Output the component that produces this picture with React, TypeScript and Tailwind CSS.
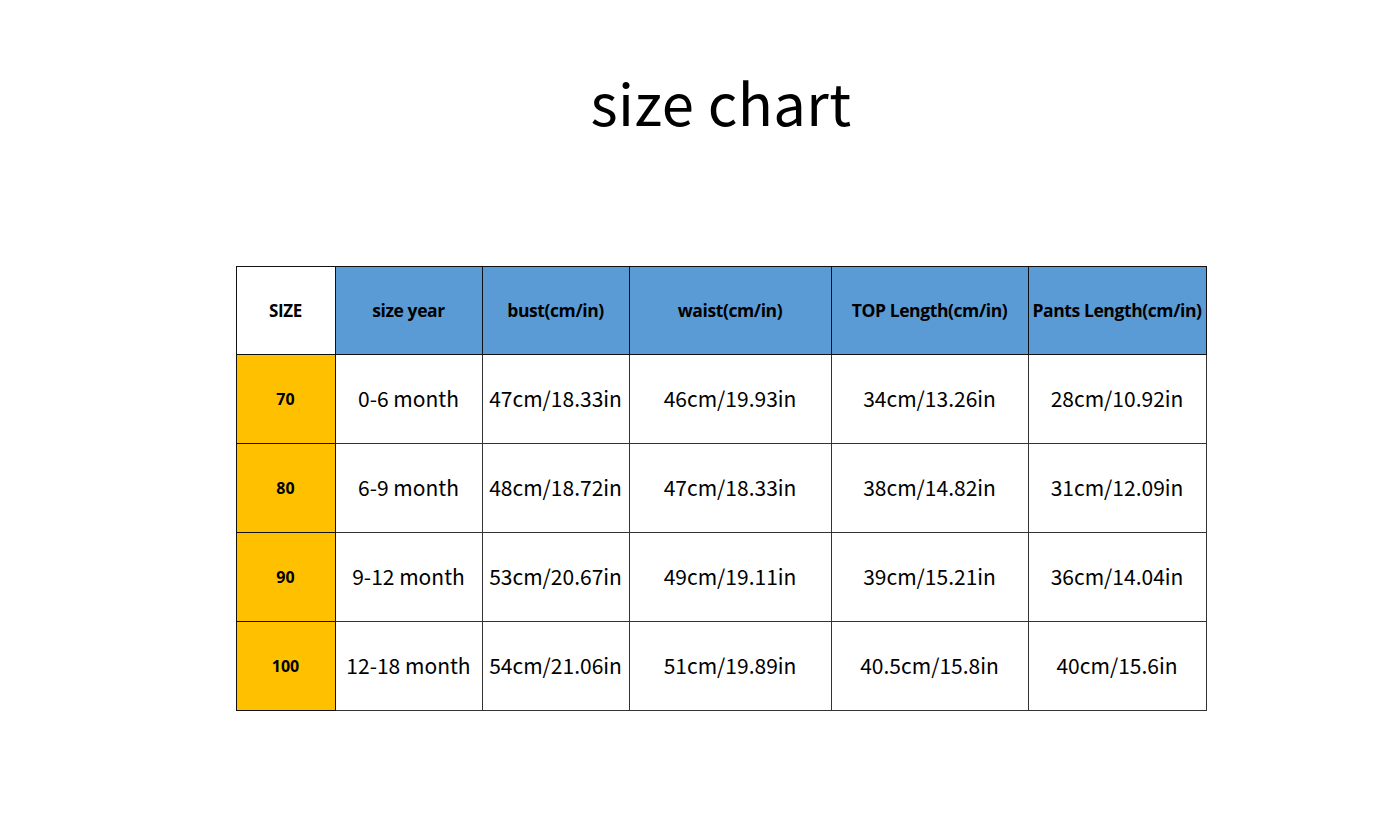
import React from 'react';

const rows = [
  ['70', '0-6 month', '47cm/18.33in', '46cm/19.93in', '34cm/13.26in', '28cm/10.92in'],
  ['80', '6-9 month', '48cm/18.72in', '47cm/18.33in', '38cm/14.82in', '31cm/12.09in'],
  ['90', '9-12 month', '53cm/20.67in', '49cm/19.11in', '39cm/15.21in', '36cm/14.04in'],
  ['100', '12-18 month', '54cm/21.06in', '51cm/19.89in', '40.5cm/15.8in', '40cm/15.6in'],
];

const headers = ['size year', 'bust(cm/in)', 'waist(cm/in)', 'TOP Length(cm/in)', 'Pants Length(cm/in)'];
const widths = ['w-[99px]', 'w-[147px]', 'w-[147px]', 'w-[202px]', 'w-[197px]', 'w-[178px]'];

export default function App() {
  return (
    <div className="w-[1400px] h-[840px] bg-white flex flex-col items-center pl-[42px] font-['Noto_Sans_CJK_SC','Noto_Sans',sans-serif] text-black">
      <h1 className="mt-[60px] text-[58px] leading-[82px] font-normal tracking-[0.4px]">size chart</h1>
      <table className="mt-[124px] border-collapse border border-[#111] table-fixed">
        <thead>
          <tr className="h-[88px]">
            <th className={`${widths[0]} border border-[#111] bg-white text-[17px] font-bold font-['Open_Sans',sans-serif] tracking-[-0.3px]`}>SIZE</th>
            {headers.map((h, i) => (
              <th
                key={h}
                className={`${widths[i + 1]} border border-[#111] bg-[#5b9bd5] text-[17.5px] font-bold whitespace-nowrap px-0 font-['Open_Sans',sans-serif] tracking-[-0.4px]`}
              >
                {h}
              </th>
            ))}
          </tr>
        </thead>
        <tbody>
          {rows.map((r) => (
            <tr key={r[0]} className="h-[89px]">
              <td className="border border-[#111] bg-[#ffc000] text-center text-[16px] font-bold font-['Open_Sans',sans-serif]">{r[0]}</td>
              {r.slice(1).map((c, i) => (
                <td key={i} className="border border-[#333] text-center text-[21px] whitespace-nowrap">
                  {c}
                </td>
              ))}
            </tr>
          ))}
        </tbody>
      </table>
    </div>
  );
}
